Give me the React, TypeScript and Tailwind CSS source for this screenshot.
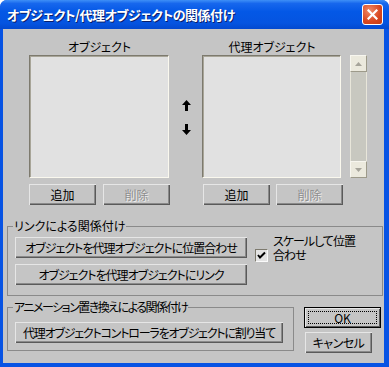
import React from "react";

const font = "[font-family:'Noto_Sans_CJK_JP','Noto_Sans',sans-serif] [font-feature-settings:'palt']";

function Btn({ w, h = 21, children, disabled, className = "", track = "" }: { w: number; h?: number; children: React.ReactNode; disabled?: boolean; className?: string; track?: string }) {
  return (
    <div
      className={`flex shrink-0 items-center justify-center whitespace-nowrap bg-[#c5c5c5] text-[12px] leading-none ${font} ${track} shadow-[inset_1px_1px_0_#e6e6e6,inset_-1px_-1px_0_#5a5a5a,inset_-2px_-2px_0_#8a8a8a] ${disabled ? "text-[#8e8e8e] [text-shadow:1px_1px_0_#ececec]" : "text-black"} ${className}`}
      style={{ width: w, height: h }}
    >
      {children}
    </div>
  );
}

function ListBox({ w }: { w: number }) {
  return <div className="h-[123px] bg-[#e1e1e1] border-t border-l border-[#7d7a6e] border-b border-r border-b-[#faf8ee] border-r-[#faf8ee] shadow-[inset_1px_1px_0_#a8a598]" style={{ width: w }} />;
}

function Group({ label, children, className = "", track = "" }: { label: string; children: React.ReactNode; className?: string; track?: string }) {
  return (
    <div className={`relative border border-[#8a8a8a] ${className}`}>
      <div className={`absolute left-[5px] top-[-9px] bg-[#c5c5c5] px-[1px] whitespace-nowrap text-[12px] leading-[16px] text-black ${font} ${track}`}>{label}</div>
      {children}
    </div>
  );
}

export default function App() {
  return (
    <div className="w-[389px] h-[367px] flex flex-col rounded-t-[7px] bg-[#0753e4] overflow-hidden">
      {/* title bar */}
      <div className="h-[29px] shrink-0 flex items-center justify-between pl-[7px] pr-[6px] bg-[linear-gradient(to_bottom,#3e8ff7_0%,#1767ed_12%,#0458e6_40%,#0554e0_80%,#0349cf_100%)]">
        <div className={`text-white font-bold text-[13px] leading-none tracking-[-0.5px] whitespace-nowrap [text-shadow:1px_1px_0_#0a1e6a] ${font}`}>オブジェクト/代理オブジェクトの関係付け</div>
        <div className="w-[21px] h-[21px] rounded-[3px] border border-white bg-[radial-gradient(circle_at_35%_30%,#f08a68,#d8461f_60%,#c23b14)] flex items-center justify-center">
          <svg width="11" height="11" viewBox="0 0 11 11">
            <path d="M1.5 1.5 L9.5 9.5 M9.5 1.5 L1.5 9.5" stroke="white" strokeWidth="2.2" strokeLinecap="square" />
          </svg>
        </div>
      </div>
      {/* client */}
      <div className="flex-1 ml-[3px] mr-[5px] mb-[4px] bg-[#c5c5c5] flex flex-col relative">
        {/* top area */}
        <div className="flex pt-[10px] pl-[26px]">
          {/* left column */}
          <div className="flex flex-col w-[141px]">
            <div className={`h-[16px] text-center text-[12px] leading-[16px] text-black ${font}`}>オブジェクト</div>
            <ListBox w={140} />
            <div className="flex gap-[7px] mt-[6px]">
              <Btn w={67}>追加</Btn>
              <Btn w={67} disabled>削除</Btn>
            </div>
          </div>
          {/* arrows */}
          <div className="w-[32px] flex flex-col items-center pt-[61px] gap-[13px]">
            <svg width="9" height="11" viewBox="0 0 9 11">
              <path d="M4.5 0 L9 5 L6 5 L6 11 L3 11 L3 5 L0 5 Z" fill="black" />
            </svg>
            <svg width="9" height="11" viewBox="0 0 9 11">
              <path d="M4.5 11 L9 6 L6 6 L6 0 L3 0 L3 6 L0 6 Z" fill="black" />
            </svg>
          </div>
          {/* right column */}
          <div className="flex flex-col w-[140px]">
            <div className={`h-[16px] text-center text-[12px] leading-[16px] text-black ${font}`}>代理オブジェクト</div>
            <ListBox w={139} />
            <div className="flex gap-[6px] mt-[6px] pl-[1px]">
              <Btn w={67}>追加</Btn>
              <Btn w={67} disabled>削除</Btn>
            </div>
          </div>
          {/* scrollbar */}
          <div className="ml-[8px] mt-[16px] w-[17px] h-[123px] flex flex-col bg-[#c8c8c0] border-x border-[#e8e6da]">
            <div className="h-[17px] -mx-px bg-[#ebe9dd] border border-[#f7f6ef] border-b-[#9d9a8a] border-r-[#9d9a8a] flex items-center justify-center">
              <svg width="7" height="4" viewBox="0 0 7 4"><path d="M0 4 L3.5 0 L7 4 Z" fill="#a6a49a" /></svg>
            </div>
            <div className="flex-1" />
            <div className="h-[17px] -mx-px bg-[#ebe9dd] border border-[#f7f6ef] border-b-[#9d9a8a] border-r-[#9d9a8a] flex items-center justify-center">
              <svg width="7" height="4" viewBox="0 0 7 4"><path d="M0 0 L3.5 4 L7 0 Z" fill="#a6a49a" /></svg>
            </div>
          </div>
        </div>
        {/* link group */}
        <Group label="リンクによる関係付け" className="mt-[21px] ml-[4px] w-[376px] h-[70px]">
          <div className="flex pt-[10px] pl-[7px]">
            <div className="flex flex-col gap-[6px] w-[232px] shrink-0">
              <Btn w={232} track="tracking-[-1px]">オブジェクトを代理オブジェクトに位置合わせ</Btn>
              <Btn w={232} track="tracking-[-1px]">オブジェクトを代理オブジェクトにリンク</Btn>
            </div>
            <div className="flex ml-[8px] mt-[-3px]">
              <div className="mt-[15px] w-[13px] h-[13px] bg-[#e4e4e4] border border-[#7d7a6e] border-b-[#fafafa] border-r-[#fafafa] flex items-center justify-center">
                <svg width="9" height="9" viewBox="0 0 9 9"><path d="M1 4 L3 6.5 L8 1.5" stroke="black" strokeWidth="2" fill="none" /></svg>
              </div>
              <div className={`ml-[5px] text-[12px] text-black tracking-[-1px] ${font}`}>
                <div className="h-[14px] leading-[14px] whitespace-nowrap">スケールして位置</div>
                <div className="h-[14px] leading-[14px] whitespace-nowrap">合わせ</div>
              </div>
            </div>
          </div>
        </Group>
        {/* bottom row */}
        <div className="flex mt-[11px] ml-[4px]">
          <Group label="アニメーション置き換えによる関係付け" track="tracking-[-1.5px]" className="w-[287px] h-[44px] shrink-0">
            <div className="pt-[14px] pl-[7px]">
              <Btn w={268} track="tracking-[-1.2px]">代理オブジェクトコントローラをオブジェクトに割り当て</Btn>
            </div>
          </Group>
          <div className="ml-[10px] flex flex-col gap-[4px]">
            <div className="w-[77px] h-[21px] border border-black bg-[#c5c5c5] p-[3px] shadow-[inset_1px_1px_0_#e6e6e6,inset_-1px_-1px_0_#5a5a5a]">
              <div className={`w-full h-full border border-dotted border-black flex items-center justify-center text-[12px] leading-none text-black ${font}`}>OK</div>
            </div>
            <Btn w={67} className="ml-[1px]" track="tracking-[-0.5px]">キャンセル</Btn>
          </div>
        </div>
      </div>
    </div>
  );
}
